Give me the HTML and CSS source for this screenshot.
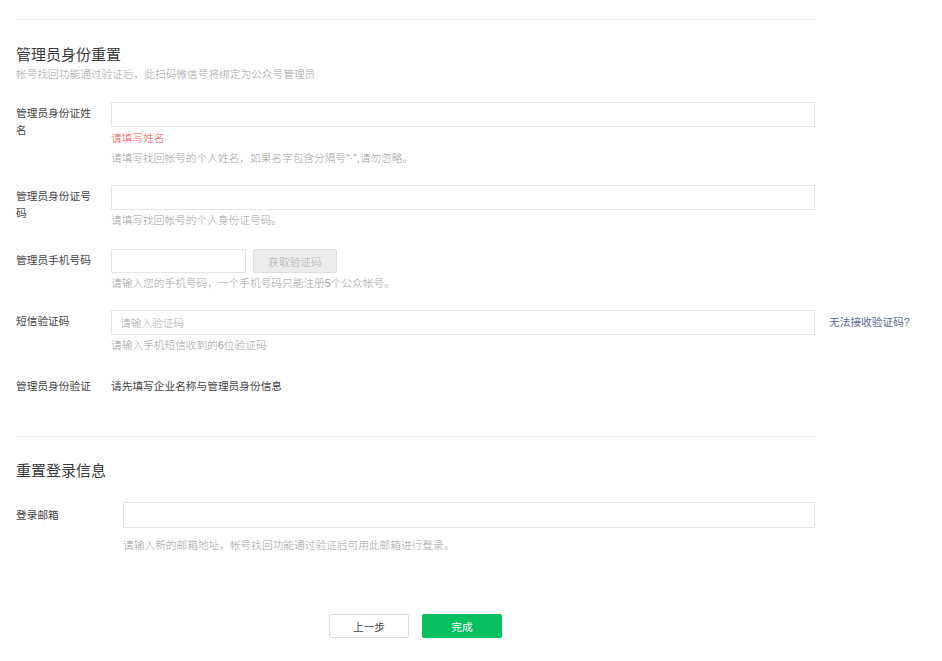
FILE: index.html
```html
<!DOCTYPE html>
<html lang="zh-CN">
<head>
    <meta charset="UTF-8">
    <title>帐号找回</title>
    <link rel="stylesheet" href="styles.css">
</head>
<body>

<div class="page">
    <div class="section">
        <h2 class="section-title">管理员身份重置</h2>
        <p class="section-desc">帐号找回功能通过验证后，此扫码微信号将绑定为公众号管理员</p>

        <div class="row">
            <label class="label">管理员身份证姓名</label>
            <div class="control">
                <input class="input" type="text">
                <div class="error">请填写姓名</div>
                <div class="tips">请填写找回帐号的个人姓名，如果名字包含分隔号“·”,请勿忽略。</div>
            </div>
        </div>

        <div class="row">
            <label class="label">管理员身份证号码</label>
            <div class="control">
                <input class="input" type="text">
                <div class="tips">请填写找回帐号的个人身份证号码。</div>
            </div>
        </div>

        <div class="row row-phone">
            <label class="label">管理员手机号码</label>
            <div class="control">
                <div class="inline">
                    <input class="input input-short" type="text">
                    <button class="btn-code" disabled>获取验证码</button>
                </div>
                <div class="tips">请输入您的手机号码，一个手机号码只能注册5个公众帐号。</div>
            </div>
        </div>

        <div class="row">
            <label class="label">短信验证码</label>
            <div class="control">
                <input class="input" type="text" placeholder="请输入验证码">
                <div class="tips">请输入手机短信收到的6位验证码</div>
            </div>
            <a class="aside-link" href="#">无法接收验证码?</a>
        </div>

        <div class="row row-last">
            <label class="label">管理员身份验证</label>
            <div class="control">
                <div class="plain">请先填写企业名称与管理员身份信息</div>
            </div>
        </div>
    </div>

    <div class="section">
        <h2 class="section-title">重置登录信息</h2>

        <div class="row row-wide">
            <label class="label">登录邮箱</label>
            <div class="control">
                <input class="input input-tall" type="text">
                <div class="tips">请输入新的邮箱地址，帐号找回功能通过验证后可用此邮箱进行登录。</div>
            </div>
        </div>
    </div>

    <div class="actions">
        <button class="btn btn-default">上一步</button>
        <button class="btn btn-primary">完成</button>
    </div>
</div>

</body>
</html>
```

FILE: styles.css
```css
body {
    margin: 0;
    font-family: "Liberation Sans", "Noto Sans CJK SC", sans-serif;
    font-size: 10.7px;
    color: #444;
    background: #fff;
}
.page {
    width: 799px;
    padding: 19px 0 0 16px;
}
.section {
    border-top: 1px solid #e7e7e7;
    padding-top: 25px;
}
.section + .section {
    margin-top: 41px;
    padding-top: 24px;
}
.section-title {
    margin: 0;
    font-size: 15px;
    font-weight: normal;
    line-height: 20px;
    color: #3a3a3a;
}
.section-desc {
    margin: 1px 0 0;
    line-height: 16px;
    font-weight: 300;
    color: #9e9e9e;
}
.row {
    display: flex;
    position: relative;
    margin-top: 17px;
}
.section-desc + .row {
    margin-top: 20px;
}
.label {
    width: 80px;
    margin-right: 15px;
    padding-top: 3px;
    line-height: 17px;
    flex-shrink: 0;
}
.control {
    flex: 1;
}
.input {
    display: block;
    box-sizing: border-box;
    width: 100%;
    height: 25px;
    margin: 0;
    padding: 0 8px;
    border: 1px solid #e4e4e4;
    border-radius: 1px;
    font-family: inherit;
    font-size: 10.7px;
    color: #353535;
    outline: none;
}
.input::placeholder {
    font-weight: 300;
    color: #a8a8a8;
}
.inline {
    display: flex;
    gap: 7px;
}
.input-short {
    width: 135px;
    height: 24px;
}
.btn-code {
    width: 84px;
    height: 24px;
    border: 1px solid #dedede;
    border-radius: 2px;
    background: #ececec;
    color: #b0b0b0;
    font-family: inherit;
    font-size: 10.7px;
    font-weight: 300;
}
.row-phone {
    margin-top: 19px;
}
.error {
    margin-top: 1px;
    line-height: 20px;
    font-weight: 300;
    color: #fa5151;
}
.tips {
    line-height: 20px;
    font-weight: 300;
    color: #9e9e9e;
}
.aside-link {
    position: absolute;
    left: 813px;
    top: 4px;
    color: #576b95;
    text-decoration: none;
    white-space: nowrap;
}
.row-last {
    margin-top: 20px;
}
.plain {
    padding-top: 3px;
    line-height: 17px;
}
.section-title + .row {
    margin-top: 21px;
}
.row-wide .label {
    width: 95px;
    margin-right: 12px;
    padding-top: 5px;
}
.input-tall {
    height: 26px;
}
.row-wide .tips {
    margin-top: 7px;
}
.actions {
    display: flex;
    justify-content: center;
    gap: 13px;
    margin-top: 59px;
}
.btn {
    box-sizing: border-box;
    width: 80px;
    height: 24px;
    border-radius: 2px;
    font-family: inherit;
    font-size: 10.7px;
    cursor: pointer;
}
.btn-default {
    border: 1px solid #dcdcdc;
    background: #fff;
    color: #444;
}
.btn-primary {
    border: 1px solid #07c160;
    background: #07c160;
    color: #fff;
}
```
